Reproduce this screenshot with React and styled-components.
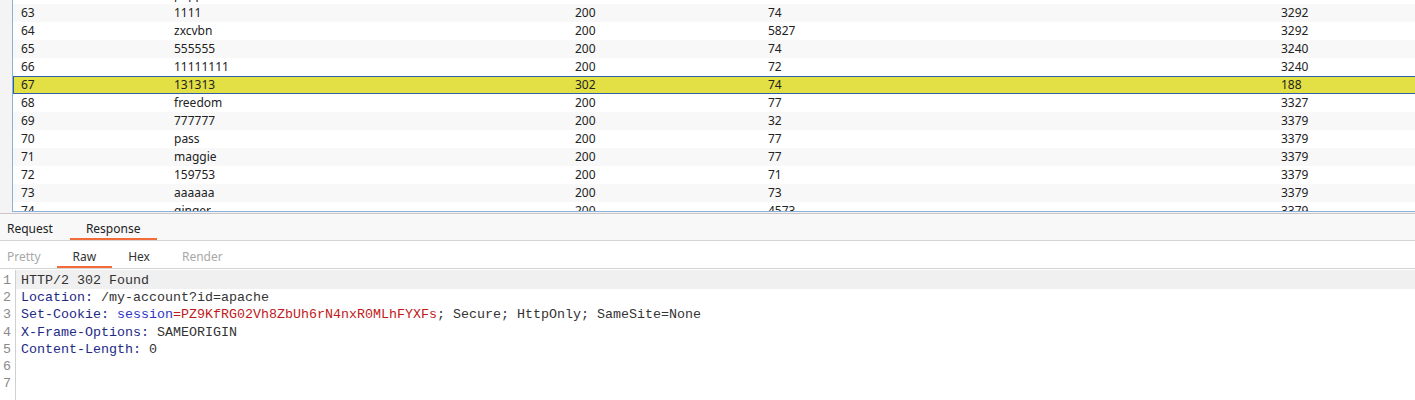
import React from 'react';
import styled, { createGlobalStyle } from 'styled-components';

const rows = [
  ['62', 'pepper', '200', '74', '3292'],
  ['63', '1111', '200', '74', '3292'],
  ['64', 'zxcvbn', '200', '5827', '3292'],
  ['65', '555555', '200', '74', '3240'],
  ['66', '11111111', '200', '72', '3240'],
  ['67', '131313', '302', '74', '188'],
  ['68', 'freedom', '200', '77', '3327'],
  ['69', '777777', '200', '32', '3379'],
  ['70', 'pass', '200', '77', '3379'],
  ['71', 'maggie', '200', '77', '3379'],
  ['72', '159753', '200', '71', '3379'],
  ['73', 'aaaaaa', '200', '73', '3379'],
  ['74', 'ginger', '200', '4573', '3379'],
];

const selectedRow = '67';

function App() {
  return (
    <>
      <GlobalStyle />
      <Page>
        <TopPane>
          <ResultsTable>
            <TableBody>
              {rows.map((r) => (
                <Row
                  key={r[0]}
                  $striped={Number(r[0]) % 2 === 1}
                  $selected={r[0] === selectedRow}
                >
                  {r.map((cell, i) => (
                    <Cell key={i}>{cell}</Cell>
                  ))}
                </Row>
              ))}
            </TableBody>
          </ResultsTable>
        </TopPane>

        <TabBar>
          <Tab $first>Request</Tab>
          <Tab $active>Response</Tab>
        </TabBar>

        <SubTabBar>
          <SubTab $first $muted>Pretty</SubTab>
          <SubTab $active>Raw</SubTab>
          <SubTab>Hex</SubTab>
          <SubTab $muted>Render</SubTab>
        </SubTabBar>

        <Editor>
          <Gutter>
            {[1, 2, 3, 4, 5, 6, 7].map((n) => (
              <LineNo key={n}>{n}</LineNo>
            ))}
          </Gutter>
          <Code>
            <Line $current>HTTP/2 302 Found</Line>
            <Line>
              <Key>Location:</Key> /my-account?id=apache
            </Line>
            <Line>
              <Key>Set-Cookie:</Key> <CookieName>session</CookieName>
              <CookieValue>=PZ9KfRG02Vh8ZbUh6rN4nxR0MLhFYXFs</CookieValue>; Secure; HttpOnly; SameSite=None
            </Line>
            <Line>
              <Key>X-Frame-Options:</Key> SAMEORIGIN
            </Line>
            <Line>
              <Key>Content-Length:</Key> 0
            </Line>
            <Line />
            <Line />
          </Code>
        </Editor>
      </Page>
    </>
  );
}

// Styled Components here

const GlobalStyle = createGlobalStyle`
  body {
    margin: 0;
    background: #fff;
    font-family: "Noto Sans", "Open Sans", sans-serif;
  }
  * {
    box-sizing: border-box;
  }
`;

const Page = styled.div`
  width: 100%;
  height: 400px;
  overflow: hidden;
  background: #fff;
`;

const TopPane = styled.div`
  display: flex;
  height: 214px;
  padding-left: 12px;
  background: #f4f4f4;
  border-bottom: 1px solid #cdc5c5;
`;

const ResultsTable = styled.div`
  flex: 1;
  height: 212px;
  overflow: hidden;
  background: #fff;
  border-left: 1px solid #8db0da;
  border-bottom: 1px solid #8db0da;
`;

const TableBody = styled.div`
  margin-top: -14px;
`;

const Row = styled.div`
  display: grid;
  grid-template-columns: 153px 401px 193px 513px 1fr;
  height: 18px;
  line-height: 18px;
  font-size: 12px;
  color: #222;
  background: ${(p) => (p.$selected ? '#e2e044' : p.$striped ? '#f8f8f8' : '#fff')};
  box-shadow: ${(p) =>
    p.$selected
      ? 'inset 0 1px 0 #2f61a6, inset 0 -1px 0 #2f61a6, inset 1px 0 0 #2f61a6'
      : 'none'};
`;

const Cell = styled.div`
  padding-left: 8px;
  white-space: nowrap;
  overflow: hidden;
`;

const TabBar = styled.div`
  display: flex;
  height: 27px;
  background: #f8f8f8;
  border-bottom: 1px solid #d4d4d4;
`;

const Tab = styled.div`
  display: flex;
  align-items: center;
  height: 26px;
  padding: 5px 17px 0 ${(p) => (p.$first ? '7px' : '16px')};
  font-size: 12px;
  color: #222;
  border-bottom: 2px solid ${(p) => (p.$active ? '#f26b3a' : 'transparent')};
`;

const SubTabBar = styled.div`
  display: flex;
  height: 28px;
  background: #fff;
  border-bottom: 1px solid #d4d4d4;
`;

const SubTab = styled.div`
  display: flex;
  align-items: center;
  height: 27px;
  padding: 6px 16px 0 ${(p) => (p.$first ? '7px' : '16px')};
  font-size: 12px;
  color: ${(p) => (p.$muted ? '#a8a8a8' : '#333')};
  border-bottom: 2px solid ${(p) => (p.$active ? '#f26b3a' : 'transparent')};
`;

const Editor = styled.div`
  display: flex;
  padding-top: 1px;
  font-family: "Liberation Mono", "DejaVu Sans Mono", monospace;
  font-size: 13.33px;
  line-height: 17.2px;
`;

const Gutter = styled.div`
  width: 16px;
  min-height: 140px;
  padding-top: 2px;
  border-right: 1px solid #d0d0d0;
  text-align: right;
  padding-right: 4px;
  color: #8a8a8a;
`;

const LineNo = styled.div`
  height: 17.2px;
`;

const Code = styled.div`
  flex: 1;
  color: #333;
  white-space: pre;
`;

const Line = styled.div`
  height: ${(p) => (p.$current ? '19.2px' : '17.2px')};
  padding-left: 5px;
  padding-top: ${(p) => (p.$current ? '2px' : '0')};
  background: ${(p) => (p.$current ? '#f0f0f0' : 'transparent')};
`;

const Key = styled.span`
  color: #1d2a86;
`;

const CookieName = styled.span`
  color: #2b36c4;
`;

const CookieValue = styled.span`
  color: #c01a1a;
`;

export default App;
